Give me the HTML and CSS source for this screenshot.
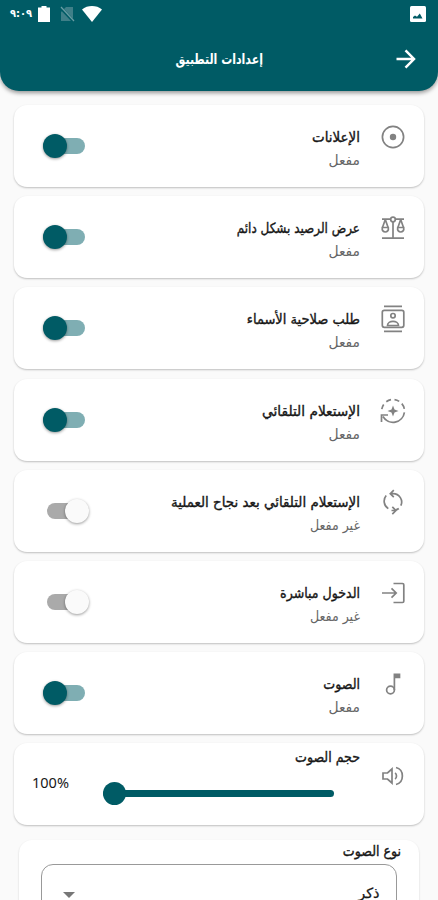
FILE: index.html
```html
<!DOCTYPE html>
<html lang="ar" dir="rtl">
<head>
<meta charset="utf-8">
<meta name="viewport" content="width=device-width, initial-scale=1">
<title>إعدادات التطبيق</title>
<link rel="stylesheet" href="styles.css">
</head>
<body>
<header class="header">
  <div class="status">
    <svg class="picture" width="16" height="16" viewBox="0 0 16 16"><rect width="16" height="16" rx="1.5" fill="#fff"/><path d="M3 12.500V11l2-1.500 2 1.200 2.800-3.200 2.700 5z" fill="#005b65"/></svg>
    <div class="status-end">
      <svg width="20" height="16" viewBox="0 0 20 16"><path d="M0 3.400C5.500-1.100 14.500-1.100 20 3.400L10 16z" fill="#fff"/></svg>
      <svg class="sim" width="15" height="16" viewBox="0 0 15 16"><path d="M6 1h7v14H1V6z" fill="#3f7f88"/><path d="M0 1 14 16" stroke="#005b65" stroke-width="3"/><path d="M1 1 14 15" stroke="#6b9ea5" stroke-width="1.200"/></svg>
      <svg class="battery" width="12" height="16" viewBox="0 0 12 16"><path d="M3.500 0h5v1.500H12V16H0V1.500h3.500z" fill="#fff"/></svg>
      <span class="time" dir="ltr">٩:٠٩</span>
    </div>
  </div>
  <div class="bar">
    <svg class="back" width="20" height="20" viewBox="0 0 20 20" fill="none" stroke="#fff" stroke-width="2.500"><path d="M.5 10h17M9.500 1.300 18 10l-8.500 8.700"/></svg>
    <h1 class="heading"><span class="fit w-heading">إعدادات التطبيق</span></h1>
  </div>
</header>
<main class="list">
  <section class="card">
    <svg class="icon" viewBox="0 0 26 28"><circle cx="13" cy="14" r="10.600"/><circle cx="13" cy="14" r="3.200" class="solid"/></svg>
    <div class="texts"><h2><span class="fit w-ads">الإعلانات</span></h2><p><span class="fit w-on">مفعل</span></p></div>
    <span class="switch on"></span>
  </section>
  <section class="card">
    <svg class="icon" viewBox="0 0 26 28"><path d="M2 24.200H24M13 7.500v16.500M2 5.200h8.500M15.500 5.200H24M5.300 5.500 2.500 13.500M5.300 5.500l2.800 8M20.700 5.500l-2.800 8M20.700 5.500l2.800 8"/><circle cx="13" cy="5.500" r="2.300"/><path d="M2.300 13.500h6c1.200 6-7.200 6-6 0zM17.700 13.500h6c1.200 6-7.200 6-6 0z"/></svg>
    <div class="texts"><h2><span class="fit w-balance">عرض الرصيد بشكل دائم</span></h2><p><span class="fit w-on">مفعل</span></p></div>
    <span class="switch on"></span>
  </section>
  <section class="card">
    <svg class="icon" viewBox="0 0 26 28"><path d="M4 1.300h18M4 26.300h18"/><rect x="2.300" y="5.300" width="21.500" height="17" rx="2"/><circle cx="13" cy="10.700" r="2.200"/><path d="M7.500 20.500c0-5.500 11-5.500 11 0z"/></svg>
    <div class="texts"><h2><span class="fit w-names">طلب صلاحية الأسماء</span></h2><p><span class="fit w-on">مفعل</span></p></div>
    <span class="switch on"></span>
  </section>
  <section class="card">
    <svg class="icon" viewBox="0 0 26 28"><path d="M1.800 12.200A11.500 11.500 0 0 1 3.700 7.500M6.300 4.800A11.500 11.500 0 0 1 11 2.700M14.500 2.600A11.500 11.500 0 0 1 19.200 4.400M21.800 6.600A11.500 11.500 0 0 1 24.300 11.800M24.400 15.400A11.500 11.500 0 0 1 3 19.500M1.500 25v-7h6.500"/><path class="solid" d="M13 8.500l1.500 4 4 1.500-4 1.500-1.500 4-1.500-4-4-1.500 4-1.500z"/></svg>
    <div class="texts"><h2><span class="fit w-auto">الإستعلام التلقائي</span></h2><p><span class="fit w-on">مفعل</span></p></div>
    <span class="switch on"></span>
  </section>
  <section class="card">
    <svg class="icon" viewBox="0 0 26 28"><path d="M8.300 20.600C3.500 17.500 3 11.300 6.200 7.500M10.500 5.700H13c6.500 0 10.500 6.500 7.800 12M18.800 20.500c-1.700 1.300-3.600 2-5.800 2h-1.500M13.800 2.200l-3.500 3.500 3.500 3.500M12.300 18.900l3.600 3.600-3.600 3.600"/></svg>
    <div class="texts"><h2><span class="fit w-after">الإستعلام التلقائي بعد نجاح العملية</span></h2><p><span class="fit w-off">غير مفعل</span></p></div>
    <span class="switch"></span>
  </section>
  <section class="card">
    <svg class="icon" viewBox="0 0 26 28"><path d="M13.500 4.500h9q1.300 0 1.300 1.300v16.400q0 1.300-1.300 1.300h-9M2 14h14M11.500 9.300l4.700 4.700-4.700 4.700"/></svg>
    <div class="texts"><h2><span class="fit w-direct">الدخول مباشرة</span></h2><p><span class="fit w-off">غير مفعل</span></p></div>
    <span class="switch"></span>
  </section>
  <section class="card">
    <svg class="icon" viewBox="0 0 26 28"><circle cx="10.500" cy="20" r="3.900"/><path d="M14.400 20V4.300h5.100v3.200h-5.100M14.400 5.900h5"/></svg>
    <div class="texts"><h2><span class="fit w-sound">الصوت</span></h2><p><span class="fit w-on">مفعل</span></p></div>
    <span class="switch on"></span>
  </section>
  <section class="card volume">
    <svg class="icon" viewBox="0 0 26 28"><path d="M3 11h4.500L12 7v14l-4.500-4H3zM15 11c2 1 2 5 0 6M16 5.500c8.500 2 8.500 15 0 17"/></svg>
    <div class="control"><h2><span class="fit w-volume">حجم الصوت</span></h2><div class="slider"></div></div>
    <span class="percent" dir="ltr">100%</span>
  </section>
  <section class="voice">
    <h2><span class="fit w-voice">نوع الصوت</span></h2>
    <div class="select"><span class="fit w-male">ذكر</span><i class="caret"></i></div>
  </section>
</main>
</body>
</html>
```
FILE: styles.css
```css
* { box-sizing: border-box; }
html, body { height: 900px; overflow: hidden; }
body { margin: 0; background: #fafafa; color: #171717; font-family: "DejaVu Sans Condensed", "DejaVu Sans", sans-serif; font-size: 14px; }
h1, h2, p { margin: 0; font-weight: normal; }
svg { display: block; flex: none; }

.header { height: 91px; background: #005b65; border-radius: 0 0 19px 19px; box-shadow: 0 2px 4px rgba(0,0,0,.4); color: #fff; }
.status { display: flex; justify-content: space-between; height: 30px; padding: 6px 12px 0 10px; }
.status-end { display: flex; direction: rtl; }
.sim { margin-right: 7px; }
.battery { margin-right: 10px; }
.time { width: 22px; margin-right: 6px; font-size: 11px; line-height: 15px; font-weight: bold; white-space: nowrap; }
.bar { display: grid; grid-template-columns: 40px 1fr 40px; align-items: center; height: 58px; padding: 0 22px; }
.heading { display: flex; justify-content: center; height: 24px; font-size: 14px; line-height: 24px; font-weight: bold; }

/* Horizontal proportions of the individual labels */
.fit { display: block; white-space: nowrap; transform-origin: right center; }
.w-heading { transform: scaleX(.87); transform-origin: center; }
.w-ads, .w-after { transform: scaleX(1.067); }
.w-balance { transform: scaleX(.953); }
.w-names { transform: scaleX(1.035); }
.w-auto { transform: scaleX(1.089); }
.w-on { transform: scaleX(1.1); }
.w-male { transform: scaleX(1.15); }

.list { display: flex; flex-direction: column; gap: 9.200px; padding: 14px 14px 0; }
.card { display: flex; flex: none; height: 82px; padding: 18px 18px 0 29px; border-radius: 13px; background: #fff; box-shadow: 0 1px 2px rgba(0,0,0,.24); }
.icon { width: 26px; height: 28px; fill: none; stroke: #828282; stroke-width: 1.700; }
.icon .solid { fill: #828282; stroke: none; }
.texts { flex: 1; margin-right: 20px; padding-top: 3px; }
h2 { height: 23px; font-size: 14px; line-height: 23px; -webkit-text-stroke: .35px #171717; }
p { height: 23px; color: #666; font-size: 14px; line-height: 23px; }

.switch { display: flex; flex: none; align-items: center; width: 38px; height: 16px; margin: 15px 0 0 4px; border-radius: 8px; background: #aaa; }
.switch::before { content: ""; width: 24px; height: 24px; flex: none; margin-right: -4px; border-radius: 50%; background: #fafafa; box-shadow: 0 1px 3px rgba(0,0,0,.4); }
.switch.on { justify-content: flex-end; width: 42px; margin-left: 0; background: #7faeb3; }
.switch.on::before { margin-right: 0; background: #005b65; }

.volume .icon { margin-top: 1px; }
.control { flex: 1; margin: -15px 20px 0 0; }
.slider { display: flex; align-items: center; justify-content: flex-end; width: 231px; height: 7px; margin: 21px 26px 0 0; border-radius: 4px; background: #005b65; }
.slider::after { content: ""; width: 23px; height: 23px; flex: none; border-radius: 50%; background: #005b65; }
.percent { width: 37px; height: 24px; margin: 9px 0 0 -11px; font-family: "Noto Sans", sans-serif; font-size: 14.500px; line-height: 24px; }

.voice { flex: none; height: 90px; margin: 5px 5px 0; padding: 0 22px; border-radius: 13px; background: #fff; box-shadow: 0 1px 2px rgba(0,0,0,.18); }
.voice h2 { margin-right: -4px; }
.select { display: flex; justify-content: space-between; height: 56px; margin-top: 1px; padding: 15px 16px 0 21px; border: 1px solid #999; border-radius: 12px; line-height: 26px; -webkit-text-stroke: .25px #171717; }
.caret { width: 0; height: 0; margin-top: 12px; border: solid transparent; border-width: 6px 6px 0; border-top-color: #777; }
```
